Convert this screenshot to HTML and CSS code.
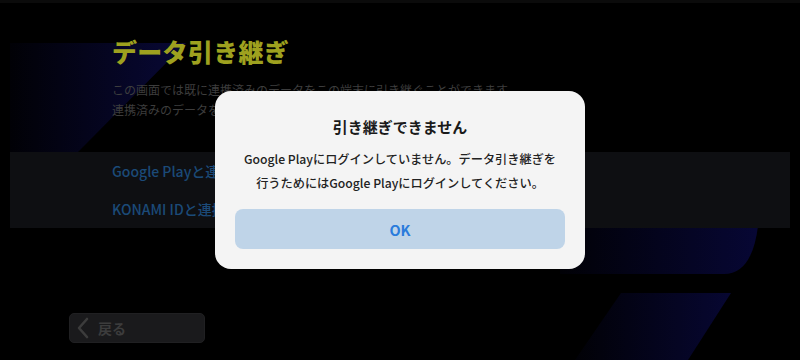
FILE: index.html
```html
<!DOCTYPE html>
<html lang="ja">
<head>
<meta charset="utf-8">
<title>データ引き継ぎ</title>
<link rel="stylesheet" href="styles.css">
</head>
<body>
<div class="page">
  <svg class="deco" width="800" height="360" viewBox="0 0 800 360" aria-hidden="true">
    <defs>
      <linearGradient id="gl" x1="10" y1="0" x2="185" y2="0" gradientUnits="userSpaceOnUse">
        <stop offset="0" stop-color="#010106"/>
        <stop offset="1" stop-color="#080836"/>
      </linearGradient>
      <linearGradient id="gr1" x1="560" y1="0" x2="757" y2="0" gradientUnits="userSpaceOnUse">
        <stop offset="0" stop-color="#010106"/>
        <stop offset="1" stop-color="#070734"/>
      </linearGradient>
      <linearGradient id="gr2" x1="575" y1="0" x2="731" y2="0" gradientUnits="userSpaceOnUse">
        <stop offset="0" stop-color="#010106"/>
        <stop offset="1" stop-color="#070732"/>
      </linearGradient>
    </defs>
    <polygon points="10,43 186,43 78,152 10,152" fill="url(#gl)"/>
    <path d="M560 226 L758 226 Q752 274 724 274 L560 274 Z" fill="url(#gr1)"/>
    <polygon points="621,293 731,293 688,360 575,360" fill="url(#gr2)"/>
  </svg>

  <main class="content">
    <h1 class="title">データ引き継ぎ</h1>
    <p class="desc">この画面では既に連携済みのデータをこの端末に引き継ぐことができます。<br>連携済みのデータを選択してください。</p>
    <div class="band">
      <div class="link">Google Playと連携したデータを引き継ぐ</div>
      <div class="link">KONAMI IDと連携したデータを引き継ぐ</div>
    </div>
    <button class="back">
      <svg class="chev" width="12" height="22" viewBox="0 0 12 22" aria-hidden="true">
        <polyline points="10,2 2,11 10,20" fill="none" stroke="#3c3c3c" stroke-width="2.6" stroke-linecap="round" stroke-linejoin="round"/>
      </svg>
      <span>戻る</span>
    </button>
  </main>

  <div class="overlay">
    <div class="dialog">
      <h2 class="d-title">引き継ぎできません</h2>
      <p class="d-body">Google Playにログインしていません。データ引き継ぎを<br>行うためにはGoogle Playにログインしてください。</p>
      <button class="ok">OK</button>
    </div>
  </div>
</div>
</body>
</html>
```
FILE: styles.css
```css
* { box-sizing: border-box; }
html, body {
  margin: 0;
  padding: 0;
  background: #000;
}
body {
  font-family: "Noto Sans CJK JP", "Noto Sans", sans-serif;
  width: 800px;
  height: 360px;
  overflow: hidden;
}
.page {
  position: relative;
  width: 800px;
  height: 360px;
  background: linear-gradient(#0b0b0b 0, #0b0b0b 3px, #000 3px);
  overflow: hidden;
}
.deco {
  position: absolute;
  left: 0;
  top: 0;
}
.content {
  position: relative;
  display: flex;
  flex-direction: column;
  padding-top: 36px;
}
.title {
  margin: 0 0 0 112px;
  font-size: 25px;
  line-height: 30px;
  font-weight: 900;
  color: #9ea11f;
  letter-spacing: 0.3px;
}
.desc {
  margin: 14px 0 0 112px;
  font-size: 12px;
  line-height: 20px;
  color: #3d3d3d;
  white-space: nowrap;
}
.band {
  margin: 32px 10px 0 10px;
  background: #0e0f12;
  display: flex;
  flex-direction: column;
}
.link {
  height: 38px;
  line-height: 38px;
  padding-left: 102px;
  font-size: 14px;
  font-weight: 500;
  color: #1b4a78;
}
.back {
  margin: 85px 0 0 69px;
  width: 136px;
  height: 30px;
  display: flex;
  align-items: center;
  gap: 9px;
  padding: 0 0 0 7px;
  background: #1a1a1c;
  border: 1px solid #202022;
  border-radius: 5px;
  font-family: "Noto Sans CJK JP", sans-serif;
  font-size: 14px;
  font-weight: 700;
  color: #3c3c3c;
}
.back .chev {
  flex: none;
}
.overlay {
  position: absolute;
  inset: 0;
  display: flex;
  align-items: center;
  justify-content: center;
}
.dialog {
  width: 370px;
  height: 178px;
  background: #f4f4f4;
  border-radius: 16px;
  padding: 25px 20px 20px;
  display: flex;
  flex-direction: column;
  align-items: center;
}
.d-title {
  margin: 0;
  font-size: 15px;
  line-height: 22px;
  font-weight: 700;
  color: #1a1a1a;
}
.d-body {
  margin: 9px 0 0;
  font-size: 12.2px;
  line-height: 24px;
  font-weight: 500;
  text-align: center;
  color: #222;
  white-space: nowrap;
}
.ok {
  margin-top: 14px;
  width: 330px;
  height: 40px;
  border: none;
  border-radius: 8px;
  background: #bfd4e8;
  color: #2a7bdc;
  font-family: "Noto Sans CJK JP", sans-serif;
  font-size: 14.5px;
  font-weight: 700;
}
```
